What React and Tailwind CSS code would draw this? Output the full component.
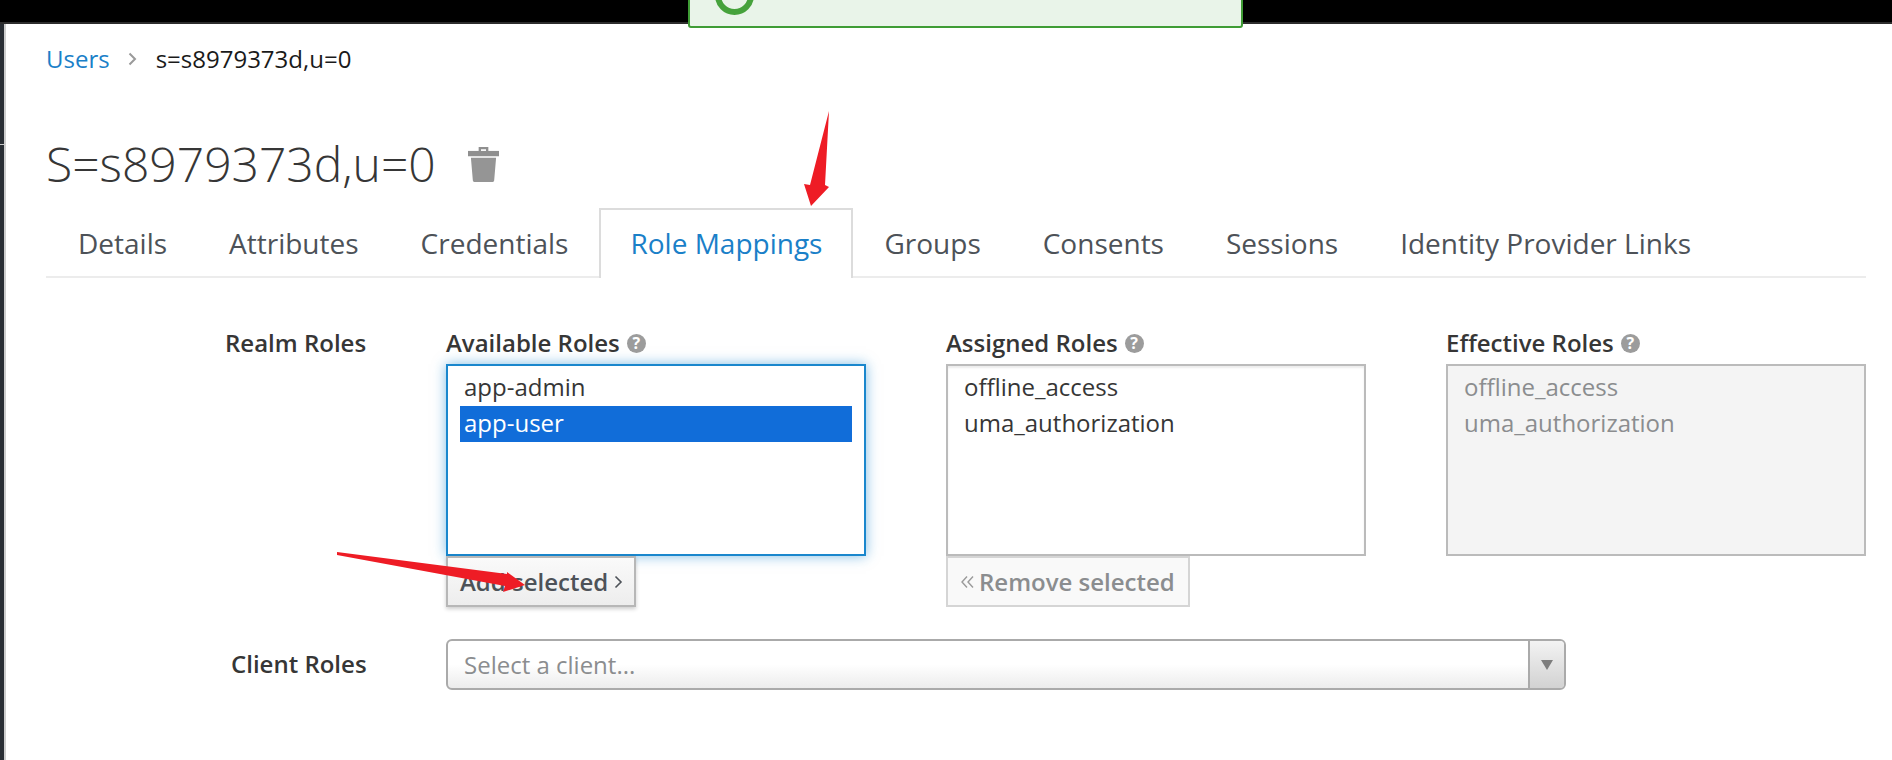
const tabs = ["Details", "Attributes", "Credentials", "Role Mappings", "Groups", "Consents", "Sessions", "Identity Provider Links"];

function HelpIcon() {
  return (
    <span className="inline-flex w-[19px] h-[19px] rounded-full bg-[#9c9c9c] text-white text-[16px] font-bold leading-none items-center justify-center ml-[7px]">?</span>
  );
}

function RoleList({ title, items, selected, variant }) {
  const box = {
    focus: "border-[#1a87cd] bg-white shadow-[0_0_12px_rgba(26,135,205,0.55)] text-[#363636]",
    normal: "border-[#bbbbbb] bg-white shadow-[inset_0_2px_2px_rgba(0,0,0,0.08)] text-[#363636]",
    disabled: "border-[#bbbbbb] bg-[#f4f4f4] text-[#8b8d8f]",
  }[variant];
  return (
    <div className="w-[420px]">
      <div className="h-[30px] flex items-center text-[24px] font-semibold text-[#363636] leading-none">
        {title}
        <HelpIcon />
      </div>
      <div className={`h-[192px] mt-[6px] border-2 px-[12px] pt-[4px] text-[24px] leading-[34px] ${box}`}>
        {items.map((item) => (
          <div key={item} className={item === selected ? "bg-[#116dd9] text-white px-[4px] h-[36px]" : "px-[4px] h-[36px]"}>
            {item}
          </div>
        ))}
      </div>
    </div>
  );
}

export default function App() {
  return (
    <div className="relative w-[1892px] h-[760px] bg-white overflow-hidden flex flex-col font-['Open_Sans',sans-serif]">
      {/* top bar */}
      <div className="h-[24px] bg-black border-b-2 border-[#2d2d2d] shrink-0" />
      <div className="absolute left-[688px] top-[-10px] w-[555px] h-[38px] bg-[#e9f4e9] border-2 border-[#3f9c35] rounded-[3px]">
        <div className="absolute left-[25px] top-[-16px] w-[39px] h-[39px] rounded-full border-[6px] border-[#46a23c]" />
      </div>

      <div className="flex flex-1">
        <div className="w-[4px] bg-[#292e34] flex flex-col pt-[120px] shrink-0">
          <div className="h-px bg-[#c8c8c8]" />
        </div>
        <div className="w-[2px] bg-[#cdcdcd] shrink-0" />

        <div className="flex-1 pl-[40px] pr-[26px]">
          {/* breadcrumb */}
          <div className="h-[50px] mt-[10px] flex items-center text-[24px] text-[#1a1a1a]">
            <a className="text-[#1a80c8]">Users</a>
            <svg className="ml-[18px] mr-[19px]" width="9" height="14" viewBox="0 0 9 14" fill="none">
              <path d="M1.5 1.5 7 7l-5.500 5.500" stroke="#9a9a9a" strokeWidth="2" />
            </svg>
            <span>s=s8979373d,u=0</span>
          </div>

          {/* heading */}
          <div className="h-[62px] mt-[49px] flex items-center">
            <h1 className="text-[48px] font-light text-[#363636] leading-none">S=s8979373d,u=0</h1>
            <svg className="ml-[32px]" width="31" height="36" viewBox="0 0 32 37">
              <path d="M11 5V1h10v4h-2.400V3.400h-5.200V5z" fill="#8f8f8f" />
              <path d="M0 5h32v5.500H0z" fill="#8f8f8f" />
              <path d="M3 12h26l-2 23.500a1.500 1.500 0 0 1-1.500 1.500h-19a1.500 1.500 0 0 1-1.500-1.500z" fill="#959595" />
            </svg>
          </div>

          {/* tabs */}
          <div className="flex h-[70px] mt-[13px] pl-px border-b-2 border-[#ececec] text-[28px] text-[#4d5258]">
            {tabs.map((tab) =>
              tab === "Role Mappings" ? (
                <div key={tab} className="h-[70px] px-[29px] pt-[12px] border-2 border-b-0 border-[#dcdcdc] bg-white text-[#1a80c8]">{tab}</div>
              ) : (
                <div key={tab} className="h-[68px] px-[31px] pt-[14px]">{tab}</div>
              )
            )}
          </div>

          {/* realm roles */}
          <div className="flex mt-[50px]">
            <div className="w-[400px] pl-[179px] h-[30px] flex items-center text-[24px] font-semibold text-[#363636]">Realm Roles</div>
            <div className="flex gap-[80px]">
              <div>
                <RoleList title="Available Roles" items={["app-admin", "app-user"]} selected="app-user" variant="focus" />
                <button className="w-[190px] h-[51px] border-2 border-[#b7b7b7] bg-gradient-to-b from-[#fafafa] to-[#ededed] shadow-[0_2px_4px_rgba(0,0,0,0.2)] text-[24px] font-semibold text-[#4d5258] flex items-center pl-[12px] gap-[6px]">
                  Add selected
                  <svg width="9" height="14" viewBox="0 0 9 14" fill="none">
                    <path d="M1.500 1.500 7 7l-5.500 5.500" stroke="#4d5258" strokeWidth="1.600" />
                  </svg>
                </button>
              </div>
              <div>
                <RoleList title="Assigned Roles" items={["offline_access", "uma_authorization"]} variant="normal" />
                <button className="w-[244px] h-[51px] border-2 border-[#d5d5d5] bg-[#f9f9f9] text-[24px] font-semibold text-[#8b8d8f] flex items-center pl-[13px] gap-[5px]">
                  <svg width="13" height="14" viewBox="0 0 13 14" fill="none">
                    <path d="M6 1.500 1 7l5 5.500M12 1.500 7 7l5 5.500" stroke="#9a9a9a" strokeWidth="1.400" />
                  </svg>
                  Remove selected
                </button>
              </div>
              <RoleList title="Effective Roles" items={["offline_access", "uma_authorization"]} variant="disabled" />
            </div>
          </div>

          {/* client roles */}
          <div className="flex mt-[32px]">
            <div className="w-[400px] pl-[185px] pb-[2px] h-[51px] flex items-center text-[24px] font-semibold text-[#363636]">Client Roles</div>
            <div className="w-[1120px] h-[51px] flex border-2 border-[#aaaaaa] rounded-[6px] overflow-hidden bg-gradient-to-b from-white from-50% to-[#ececec] text-[24px] text-[#8b8d8f]">
              <div className="flex-1 pl-[16px] flex items-center">Select a client...</div>
              <div className="w-[36px] border-l-2 border-[#aaaaaa] bg-gradient-to-b from-[#f3f3f3] to-[#d2d2d2] flex items-center justify-center">
                <svg width="12" height="10" viewBox="0 0 12 10"><path d="M0 0h12L6 10z" fill="#7d7d7d" /></svg>
              </div>
            </div>
          </div>
        </div>
      </div>

      {/* red annotation arrows */}
      <svg className="absolute left-0 top-0 pointer-events-none" width="1892" height="760">
        <path d="M829 111 825 185 829 187 811 206 804 184 810 185z" fill="#ee1c25" />
        <path d="M337 552 507 574 507 572 525 585 503 592 505 586 337 555z" fill="#ee1c25" />
      </svg>
    </div>
  );
}
